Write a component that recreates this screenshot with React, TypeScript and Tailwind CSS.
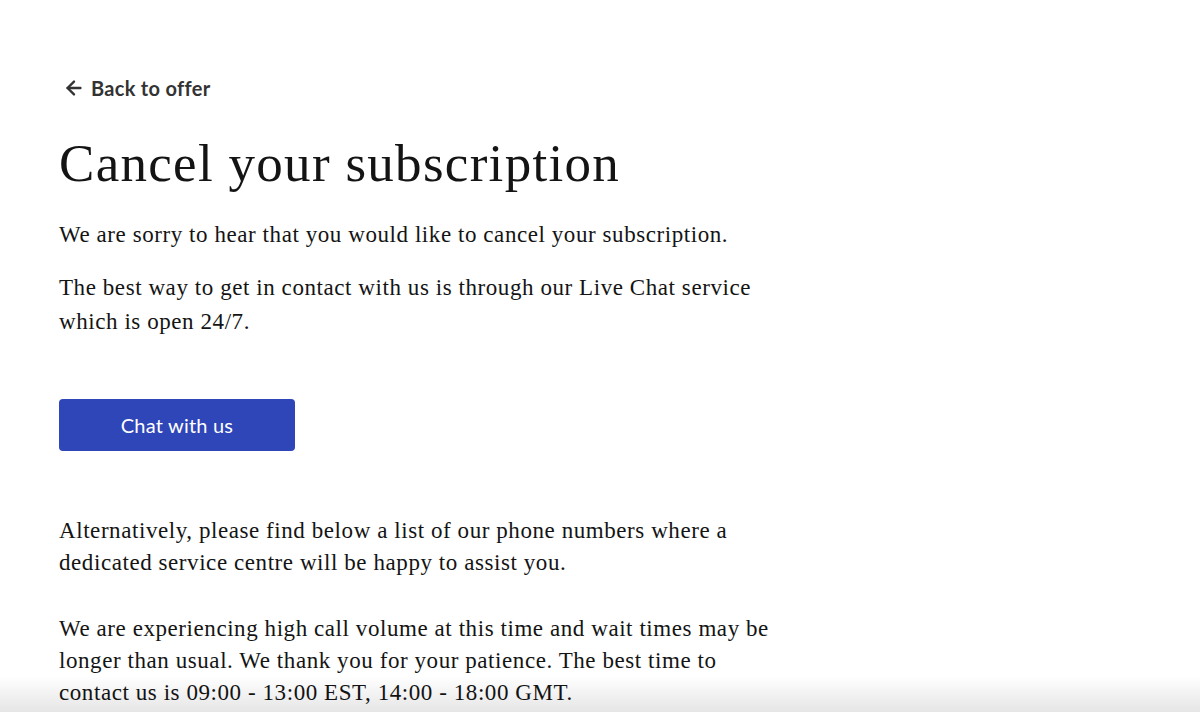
import { ArrowLeft } from "lucide-react";

const serif = { fontFamily: '"Liberation Serif", "Times New Roman", serif' };
const sans = { fontFamily: 'Lato, "Open Sans", sans-serif' };

export default function App() {
  return (
    <div className="relative min-h-[712px] bg-white text-[#141414]">
      <main className="pl-[59px] pt-[76px]" style={serif}>
        <a
          href="#"
          className="flex items-center gap-[6px] text-[20px] font-bold leading-[24px] tracking-[0.3px] text-[#333]"
          style={sans}
        >
          <ArrowLeft className="ml-[4px] h-[22px] w-[22px]" strokeWidth={2.6} />
          Back to offer
        </a>

        <h1 className="mt-[31px] text-[53px] leading-[64px] font-normal tracking-[1.3px]">
          Cancel your subscription
        </h1>

        <div className="mt-[23px] text-[23px] leading-[34px] tracking-[0.57px]">
          <p>We are sorry to hear that you would like to cancel your subscription.</p>
          <p className="mt-[19px]">
            The best way to get in contact with us is through our Live Chat service
            <br />
            which is open 24/7.
          </p>
        </div>

        <button
          className="mt-[60px] flex h-[52px] w-[236px] items-center justify-center rounded-[4px] bg-[#2e46b8] text-[20px] tracking-[0.2px] text-white"
          style={sans}
        >
          Chat with us
        </button>

        <div className="mt-[64px] text-[23px] leading-[32px] tracking-[0.57px]">
          <p>
            Alternatively, please find below a list of our phone numbers where a
            <br />
            dedicated service centre will be happy to assist you.
          </p>
          <p className="mt-[34px]">
            We are experiencing high call volume at this time and wait times may be
            <br />
            longer than usual. We thank you for your patience. The best time to
            <br />
            contact us is 09:00 - 13:00 EST, 14:00 - 18:00 GMT.
          </p>
        </div>
      </main>

      <div className="pointer-events-none fixed inset-x-0 bottom-0 h-[36px] bg-gradient-to-b from-transparent to-black/10" />
    </div>
  );
}
